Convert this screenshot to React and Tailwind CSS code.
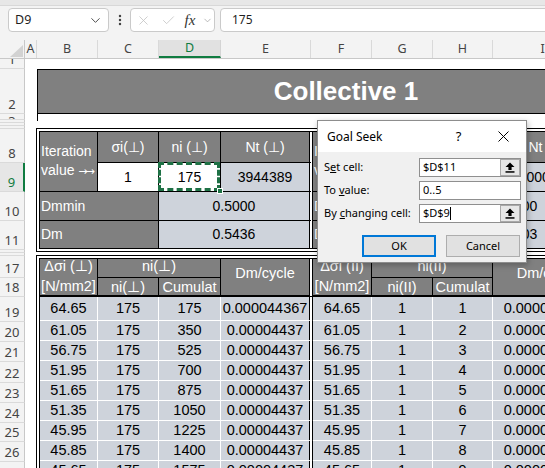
import React from 'react';
import { ChevronDown, EllipsisVertical, X, Check } from 'lucide-react';

const arial = "font-['Liberation_Sans',Arial,sans-serif]";

// sheet column headers with their pixel widths
const columns = [
    ['A', 'w-[12px]'],
    ['B', 'w-[61px]'],
    ['C', 'w-[61px]'],
    ['D', 'w-[62px]'],
    ['E', 'w-[90px]'],
    ['F', 'w-[61px]'],
    ['G', 'w-[61px]'],
    ['H', 'w-[60px]'],
    ['I', 'w-[100px]'],
];

// row headers: label, height, alignment
const rowHeads = [
    ['1', 'h-[10px]', 'end'],
    ['2', 'h-[45px]', 'end'],
    ['3', 'h-[6px]', 'start'],
    ['', 'h-[3px]', 'end'],
    ['', 'h-[3px]', 'end'],
    ['', 'h-[2px]', 'end'],
    ['8', 'h-[34px]', 'end'],
    ['9', 'h-[29px]', 'end'],
    ['10', 'h-[29px]', 'end'],
    ['11', 'h-[29px]', 'end'],
    ['', 'h-[3px]', 'end'],
    ['', 'h-[3px]', 'end'],
    ['17', 'h-[22px]', 'end'],
    ['18', 'h-[19px]', 'end'],
    ['19', 'h-[25px]', 'end'],
    ['20', 'h-[20px]', 'end'],
    ['21', 'h-[20px]', 'end'],
    ['22', 'h-[21px]', 'end'],
    ['23', 'h-[20px]', 'end'],
    ['24', 'h-[20px]', 'end'],
    ['25', 'h-[19px]', 'end'],
    ['26', 'h-[20px]', 'end'],
    ['27', 'h-[20px]', 'end'],
];

const cycles = [
    ['64.65', '175', '175', '0.000044367', '1', '1'],
    ['61.05', '175', '350', '0.00004437', '1', '2'],
    ['56.75', '175', '525', '0.00004437', '1', '3'],
    ['51.95', '175', '700', '0.00004437', '1', '4'],
    ['51.65', '175', '875', '0.00004437', '1', '5'],
    ['51.35', '175', '1050', '0.00004437', '1', '6'],
    ['45.95', '175', '1225', '0.00004437', '1', '7'],
    ['45.85', '175', '1400', '0.00004437', '1', '8'],
    ['45.65', '175', '1575', '0.00004437', '1', '9'],
];

function FormulaBar() {
    return (
        <div className="h-[40px] bg-[#f3f3f3] flex flex-col">
            <div className="h-[6px] bg-[#e7e7e7] border-b border-[#d8d8d8]" />
            <div className="flex items-center h-[24px] mt-[2px] pl-[8px]">
                <div className="w-[101px] shrink-0 h-full bg-white border border-[#cacaca] rounded-[4px] flex items-center pl-[6px] pr-[5px] text-[12.5px] text-[#1f1f1f]">
                    <span className="flex-1">D9</span>
                    <ChevronDown size={15} strokeWidth={1.5} className="text-[#424242]" />
                </div>
                <div className="w-[21px] shrink-0 flex justify-center text-[#444]">
                    <EllipsisVertical size={14} strokeWidth={2.2} />
                </div>
                <div className="w-[85px] shrink-0 h-full bg-white border border-[#cacaca] rounded-[4px] flex items-center">
                    <span className="w-[25px] flex justify-center text-[#c4c4c4]"><X size={15} strokeWidth={1.3} /></span>
                    <span className="w-[24px] flex justify-center text-[#c4c4c4]"><Check size={15} strokeWidth={1.3} /></span>
                    <span className="w-[20px] flex justify-center font-['Liberation_Serif',serif] italic text-[15px] text-[#333]">fx</span>
                    <span className="w-[14px] flex justify-center text-[#9a9a9a]"><ChevronDown size={11} strokeWidth={1.5} /></span>
                </div>
                <div className="ml-[5px] w-[400px] shrink-0 h-full bg-white border border-[#cacaca] rounded-[4px] flex items-center pl-[11px] text-[12px] text-[#1f1f1f]">
                    175
                </div>
            </div>
        </div>
    );
}

function ColumnHeaders() {
    return (
        <div className="flex h-[19px] bg-[#f3f3f3] border-b border-[#c8c8c8] text-[12.5px] text-[#444]">
            <div className="w-[25px] shrink-0 border-r border-[#c8c8c8] flex items-end justify-end pr-[1px] pb-[1px]">
                <svg width="13" height="12" viewBox="0 0 13 12">
                    <path d="M13 0V12H0Z" fill="#d2d2d2" />
                </svg>
            </div>
            {columns.map(([name, w]) => (
                <div
                    key={name}
                    className={
                        name === 'D'
                            ? `${w} shrink-0 flex items-center justify-center bg-[#e1e1e1] text-[#107c41] border-r border-[#d4d4d4] border-b-2 border-b-[#107c41]`
                            : `${w} shrink-0 flex items-center justify-center border-r border-[#d9d9d9]`
                    }
                >
                    {name}
                </div>
            ))}
        </div>
    );
}

function RowHeaders() {
    return (
        <div className="w-[25px] shrink-0 flex flex-col bg-[#f3f3f3] text-[13px] text-[#444]">
            {rowHeads.map(([label, h, align], i) => (
                <div
                    key={i}
                    className={[
                        h,
                        'shrink-0 overflow-hidden flex justify-center leading-[14px] border-b border-[#dadada]',
                        align === 'start' ? 'items-start' : 'items-end pb-[2px]',
                        label === '9'
                            ? 'bg-[#e6e6e6] text-[#107c41] border-r-2 border-r-[#107c41]'
                            : 'border-r border-r-[#c8c8c8]',
                    ].join(' ')}
                >
                    {label}
                </div>
            ))}
        </div>
    );
}

function IterationLabel({ className }) {
    return (
        <div className={`${className} row-span-2 flex-col !items-start justify-center pl-[1px] leading-[19px] whitespace-nowrap overflow-hidden`}>
            <span>Iteration</span>
            <span>
                value <span className="font-['DejaVu_Sans',sans-serif] text-[11px] tracking-[-2px]">→→</span>
            </span>
        </div>
    );
}

function IterationTable() {
    const base = 'flex items-center border-r border-b border-black';
    const g = `${base} bg-[#808080] text-white`;
    const lt = `${base} bg-[#ced3db] justify-center`;
    const wh = `${base} bg-white justify-center`;
    const split = 'border-r-4 border-double border-r-black bg-clip-padding';

    return (
        <div className="ml-[11px] w-max border-4 border-double border-black bg-white">
            <div className={`grid grid-cols-[58px_61px_62px_92px_59px_61px_60px_107px] grid-rows-[31px_29px_29px_27px] ${arial} text-[14px] text-black`}>
                <IterationLabel className={g} />
                <div className={`${g} justify-center`}>σi(⊥)</div>
                <div className={`${g} justify-center`}>ni (⊥)</div>
                <div className={`${g} justify-center ${split}`}>Nt (⊥)</div>
                <IterationLabel className={g} />
                <div className={`${g} justify-center`}>σi(II)</div>
                <div className={`${g} justify-center`}>ni(II)</div>
                <div className={`${g} justify-center`}>Nt (II)</div>

                <div className={wh}>1</div>
                <div className={`${wh} relative`}>
                    175
                    <div className="absolute -left-px -top-px right-0 bottom-0 border-[3px] border-dashed border-[#1e7145]" />
                    <div className="absolute -right-[3px] -bottom-[3px] w-[6px] h-[6px] bg-[#1e7145] border border-white" />
                </div>
                <div className={`${lt} ${split}`}>3944389</div>
                <div className={wh}>1</div>
                <div className={wh}>1</div>
                <div className={lt}>2000000</div>

                <div className={`${g} col-span-2 pl-[1px]`}>Dmmin</div>
                <div className={`${lt} col-span-2 ${split}`}>0.5000</div>
                <div className={`${g} col-span-2 pl-[1px]`}>Dmmin</div>
                <div className={`${lt} col-span-2`}>0.5000</div>

                <div className={`${g} col-span-2 pl-[1px] border-b-0`}>Dm</div>
                <div className={`${lt} col-span-2 border-b-0 ${split}`}>0.5436</div>
                <div className={`${g} col-span-2 pl-[1px] border-b-0`}>Dm</div>
                <div className={`${lt} col-span-2 border-b-0`}>0.0003</div>
            </div>
        </div>
    );
}

function CycleTable() {
    const head = 'flex items-center justify-center bg-[#808080] text-white border-black';
    const cell = 'flex items-center justify-center bg-[#ced3db] border-r border-b border-white';
    const split = 'border-r-4 border-double border-r-black bg-clip-padding';

    return (
        <div className="ml-[11px] w-max border-4 border-double border-black bg-white">
            <div className={`grid grid-cols-[58px_61px_62px_92px_59px_61px_60px_107px] grid-rows-[19px_19px_24px_repeat(8,20px)] ${arial} text-[14.5px] text-black`}>
                <div className={`${head} border-r pb-[4px]`}>Δσi (⊥)</div>
                <div className={`${head} col-span-2 border-r border-b pb-[3px]`}>ni(⊥)</div>
                <div className={`${head} row-span-2 border-b-2 pb-[6px] ${split}`}>Dm/cycle</div>
                <div className={`${head} border-r pb-[4px]`}>Δσi (II)</div>
                <div className={`${head} col-span-2 border-r border-b pb-[3px]`}>ni(II)</div>
                <div className={`${head} row-span-2 border-b-2 pb-[6px]`}>Dm/cycle</div>

                <div className={`${head} border-r border-b-2`}>[N/mm2]</div>
                <div className={`${head} border-r border-b-2 pt-[3px]`}>ni(⊥)</div>
                <div className={`${head} border-r border-b-2 pt-[3px]`}>Cumulat</div>
                <div className={`${head} border-r border-b-2`}>[N/mm2]</div>
                <div className={`${head} border-r border-b-2 pt-[3px]`}>ni(II)</div>
                <div className={`${head} border-r border-b-2 pt-[3px]`}>Cumulat</div>

                {cycles.map((r) => (
                    <React.Fragment key={r[2]}>
                        <div className={cell}>{r[0]}</div>
                        <div className={cell}>{r[1]}</div>
                        <div className={cell}>{r[2]}</div>
                        <div className={`${cell} ${split}`}>{r[3]}</div>
                        <div className={cell}>{r[0]}</div>
                        <div className={cell}>{r[4]}</div>
                        <div className={cell}>{r[5]}</div>
                        <div className={cell}>0.000000254</div>
                    </React.Fragment>
                ))}
            </div>
        </div>
    );
}

function RefEditButton() {
    return (
        <div className="w-[20px] h-full shrink-0 border border-[#a8a8a8] bg-[#e6e6e6] flex items-center justify-center">
            <svg width="10" height="11" viewBox="0 0 10 11">
                <path d="M5 0.5L9.5 5H6.6V8H3.4V5H0.5Z" fill="#000" />
                <rect x="0.5" y="9.2" width="9" height="1.5" fill="#000" />
            </svg>
        </div>
    );
}

function GoalSeek() {
    return (
        <div className="absolute left-[317px] top-[120px] w-[210px] h-[143px] border border-[#8d8d8d] bg-[#f0f0f0] shadow-[1px_2px_6px_rgba(0,0,0,0.28)] font-['Noto_Sans',sans-serif] text-[11px] text-black flex flex-col">
            <div className="h-[31px] shrink-0 bg-white flex items-center pl-[9px]">
                <span className="flex-1 text-[12px]">Goal Seek</span>
                <span className="w-[45px] text-center text-[13px]">?</span>
                <span className="w-[45px] flex justify-center">
                    <svg width="11" height="11" viewBox="0 0 11 11">
                        <path d="M0.5 0.5L10.5 10.5M10.5 0.5L0.5 10.5" stroke="#000" strokeWidth="1" />
                    </svg>
                </span>
            </div>
            <div className="flex flex-col pt-[6px] gap-[4px]">
                <div className="flex items-center h-[19px]">
                    <span className="w-[101px] pl-[6px]">S<u>e</u>t cell:</span>
                    <div className="w-[102px] h-full bg-white border border-[#8f8f8f] flex items-center">
                        <span className="flex-1 pl-[3px]">$D$11</span>
                        <RefEditButton />
                    </div>
                </div>
                <div className="flex items-center h-[19px]">
                    <span className="w-[101px] pl-[6px]">To <u>v</u>alue:</span>
                    <div className="w-[102px] h-full bg-white border border-[#8f8f8f] flex items-center pl-[3px]">0..5</div>
                </div>
                <div className="flex items-center h-[19px]">
                    <span className="w-[101px] pl-[6px]">By <u>c</u>hanging cell:</span>
                    <div className="w-[102px] h-full bg-white border border-[#8f8f8f] flex items-center">
                        <span className="flex-1 pl-[3px] flex items-center">
                            $D$9<span className="inline-block w-px h-[13px] bg-black" />
                        </span>
                        <RefEditButton />
                    </div>
                </div>
                <div className="flex mt-[8px] h-[22px]">
                    <div className="ml-[44px] w-[74px] h-full border-2 border-[#0078d7] bg-[#e1e1e1] flex items-center justify-center">OK</div>
                    <div className="ml-[10px] w-[74px] h-full border border-[#adadad] bg-[#e1e1e1] flex items-center justify-center">Cancel</div>
                </div>
            </div>
        </div>
    );
}

export default function App() {
    return (
        <div className="relative w-[545px] h-[468px] overflow-hidden bg-white font-['Noto_Sans',sans-serif] text-[#222]">
            <FormulaBar />
            <ColumnHeaders />
            <div className="flex">
                <RowHeaders />
                <div className="flex-1 min-w-0 overflow-hidden">
                    <div className="h-[10px]" />
                    <div className={`ml-[12px] w-[617px] h-[45px] border border-r-0 border-black bg-[#808080] flex items-center justify-center ${arial} font-bold text-[26px] text-white`}>
                        Collective 1
                    </div>
                    <div className="ml-[12px] h-[7px] border-l border-black" />
                    <div className="h-[7px]" />
                    <IterationTable />
                    <div className="h-[3px]" />
                    <CycleTable />
                </div>
            </div>
            <GoalSeek />
        </div>
    );
}
